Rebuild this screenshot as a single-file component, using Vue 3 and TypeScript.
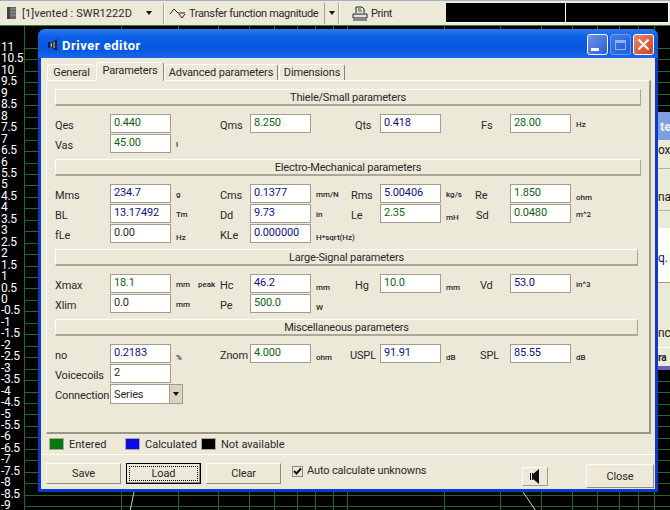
<template>
  <div class="screen">
    <div class="toolbar">
      <div class="tb-item tb-driver">
        <svg class="tb-icon" width="9" height="12" viewBox="0 0 9 12">
          <rect width="9" height="12" fill="#444" />
          <path d="M4 0v12M6 0v12M8 0v12M3 2h6M3 5h6M3 8h6" stroke="#aaa" stroke-width="0.7" />
        </svg>
        <span class="tb-text">[1]vented : SWR1222D</span>
        <span class="arrow" />
      </div>
      <div class="tb-sep" />
      <div class="tb-item tb-graph">
        <svg width="17" height="12" viewBox="0 0 17 12" fill="none" stroke="#222">
          <path d="M1 7 L5 2 L9 6 L16 6" />
          <path d="M10 7 L13 11 L16 7" />
        </svg>
        <span class="tb-text">Transfer function magnitude</span>
      </div>
      <div class="tb-drop"><span class="arrow" /></div>
      <div class="tb-sep" />
      <div class="tb-item tb-print">
        <svg width="16" height="15" viewBox="0 0 16 15" fill="none" stroke="#222">
          <path d="M4 7V1h6l2 2v4" />
          <path d="M6 3h3M6 5h4" stroke-width="0.8" />
          <path d="M1 8h14v4H1z" fill="#ddd" />
          <path d="M1 14h14" />
        </svg>
        <span class="tb-text">Print</span>
      </div>
      <div class="tb-panels">
        <div class="panel panel-a" />
        <div class="panel panel-b" />
      </div>
    </div>

    <div class="plot">
      <svg class="grid" width="670" height="485" viewBox="0 0 670 485">
        <line v-for="x in gridX" :key="'v' + x" :x1="x + 0.5" y1="0" :x2="x + 0.5" y2="485" />
        <line v-for="y in gridY" :key="'h' + y" x1="24" :y1="y" x2="670" :y2="y" />
        <path class="curve" d="M134 466 L130 485 M523 466 L536 485" />
      </svg>
      <div class="axis">
        <span v-for="t in ticks" :key="t">{{ t }}</span>
      </div>
    </div>

    <!-- window behind the dialog, only its left edge shows -->
    <div class="back-win">
      <div class="back-title">te</div>
      <div class="back-body">
        <span class="bw1">ox</span>
        <div class="back-rule r1" />
        <div class="back-rule r2" />
        <span class="bw2">na</span>
        <div class="back-white"><span class="bw3">q.</span></div>
        <span class="bw4">nce</span>
        <div class="back-rule r3" />
        <span class="bw5">ra</span>
        <div class="back-plot" />
      </div>
    </div>

    <div class="dialog">
      <div class="titlebar">
        <svg class="title-icon" width="10" height="12" viewBox="0 0 10 12">
          <path d="M0 3h2v6H0z" fill="#222" />
          <path d="M3 4l6-4v12l-6-4z" fill="#222" />
          <path d="M3.5 4.5v3M6 3v6" stroke="#ccd" />
        </svg>
        <span class="title-text">Driver editor</span>
        <div class="win-btns">
          <div class="win-btn"><span class="min-glyph" /></div>
          <div class="win-btn win-dim"><span class="max-glyph" /></div>
          <div class="win-btn win-close">
            <svg width="13" height="13" viewBox="0 0 13 13">
              <path d="M1.5 1.5l10 10M11.5 1.5l-10 10" stroke="#fff" stroke-width="2.2" />
            </svg>
          </div>
        </div>
      </div>

      <div class="client">
        <div class="tabs">
          <div v-for="t in tabs" :key="t" class="tab" :class="{ active: t === 'Parameters' }">{{ t }}</div>
        </div>

        <div class="page">
          <section v-for="s in sections" :key="s.title" class="section">
            <div class="sec-head" :class="{ short: s.short }">{{ s.title }}</div>
            <div class="rows">
              <div v-for="(row, i) in s.rows" :key="i" class="row">
                <template v-for="(c, j) in row" :key="j">
                  <div class="lbl" :style="{ marginLeft: (c.indent ?? 0) + 'px' }">{{ c.label }}</div>
                  <div class="field" :class="c.kind">{{ c.value }}</div>
                  <div class="unit" :class="{ low: c.low }">{{ c.unit }}</div>
                </template>
              </div>
              <div v-if="s.title.startsWith('Misc')" class="row">
                <div class="lbl">Connection</div>
                <div class="combo">
                  <span>Series</span>
                  <span class="combo-btn"><span class="arrow" /></span>
                </div>
              </div>
            </div>
          </section>
        </div>

        <div class="legend">
          <span class="swatch green" /><span class="leg-text">Entered</span>
          <span class="swatch blue" /><span class="leg-text">Calculated</span>
          <span class="swatch black" /><span class="leg-text">Not available</span>
        </div>

        <div class="footer">
          <button class="btn">Save</button>
          <button class="btn default"><span class="focus">Load</span></button>
          <button class="btn">Clear</button>
          <label class="check">
            <span class="box">
              <svg width="9" height="9" viewBox="0 0 9 9">
                <path d="M1 4l2.5 2.5L8 1.5" fill="none" stroke="#111" stroke-width="2" />
              </svg>
            </span>
            Auto calculate unknowns
          </label>
          <button class="icon-btn">
            <svg width="10" height="15" viewBox="0 0 10 15">
              <path d="M0 4h1v7H0zM2 4h1v7H2z" fill="#111" />
              <path d="M3 5l6-5v15l-6-5z" fill="#111" />
            </svg>
          </button>
          <button class="btn close-btn">Close</button>
        </div>
      </div>
    </div>
  </div>
</template>

<script setup lang="ts">
type Kind = 'ent' | 'calc' | 'none'

interface Cell {
  label: string
  value: string
  unit?: string
  kind: Kind
  indent?: number
  low?: boolean
}

interface Section {
  title: string
  short?: boolean
  rows: Cell[][]
}

const tabs = ['General', 'Parameters', 'Advanced parameters', 'Dimensions']

const sections: Section[] = [
  {
    title: 'Thiele/Small parameters',
    rows: [
      [
        { label: 'Qes', value: '0.440', kind: 'ent' },
        { label: 'Qms', value: '8.250', kind: 'ent' },
        { label: 'Qts', value: '0.418', kind: 'calc', indent: 5 },
        { label: 'Fs', value: '28.00', unit: 'Hz', kind: 'ent', indent: 1 }
      ],
      [{ label: 'Vas', value: '45.00', unit: 'l', kind: 'ent' }]
    ]
  },
  {
    title: 'Electro-Mechanical parameters',
    rows: [
      [
        { label: 'Mms', value: '234.7', unit: 'g', kind: 'calc' },
        { label: 'Cms', value: '0.1377', unit: 'mm/N', kind: 'calc' },
        { label: 'Rms', value: '5.00406', unit: 'kg/s', kind: 'calc', indent: 1 },
        { label: 'Re', value: '1.850', unit: 'ohm', kind: 'ent', indent: -5, low: true }
      ],
      [
        { label: 'BL', value: '13.17492', unit: 'Tm', kind: 'calc' },
        { label: 'Dd', value: '9.73', unit: 'in', kind: 'calc' },
        { label: 'Le', value: '2.35', unit: 'mH', kind: 'ent', indent: 1, low: true },
        { label: 'Sd', value: '0.0480', unit: 'm^2', kind: 'ent', indent: -4 }
      ],
      [
        { label: 'fLe', value: '0.00', unit: 'Hz', kind: 'none', low: true },
        { label: 'KLe', value: '0.000000', unit: 'H*sqrt(Hz)', kind: 'calc', low: true }
      ]
    ]
  },
  {
    title: 'Large-Signal parameters',
    short: true,
    rows: [
      [
        { label: 'Xmax', value: '18.1', unit: 'mm    peak', kind: 'ent' },
        { label: 'Hc', value: '46.2', unit: 'mm', kind: 'calc', low: true },
        { label: 'Hg', value: '10.0', unit: 'mm', kind: 'ent', indent: 5, low: true },
        { label: 'Vd', value: '53.0', unit: 'in^3', kind: 'calc' }
      ],
      [
        { label: 'Xlim', value: '0.0', unit: 'mm', kind: 'none' },
        { label: 'Pe', value: '500.0', unit: 'W', kind: 'ent', low: true }
      ]
    ]
  },
  {
    title: 'Miscellaneous parameters',
    short: true,
    rows: [
      [
        { label: 'no', value: '0.2183', unit: '%', kind: 'calc', low: true },
        { label: 'Znom', value: '4.000', unit: 'ohm', kind: 'ent', low: true },
        { label: 'USPL', value: '91.91', unit: 'dB', kind: 'calc', low: true },
        { label: 'SPL', value: '85.55', unit: 'dB', kind: 'calc', low: true }
      ],
      [{ label: 'Voicecoils', value: '2', kind: 'none' }]
    ]
  }
]

// log-spaced verticals of the plot behind the dialog
const gridX = [24, 121, 178, 218, 249, 274, 297, 315, 333, 347, 444, 500, 541, 572, 597, 619, 638, 654]

const ticks: string[] = []
for (let v = 11; v >= -9; v -= 0.5) ticks.push(String(v))

const gridY = ticks.map((_, i) => Math.round(22 + i * 11.45) + 0.5)
</script>

<style>
html,
body {
  margin: 0;
  background: #000;
  overflow: hidden;
}
</style>

<style scoped>
.screen {
  position: relative;
  width: 670px;
  height: 510px;
  overflow: hidden;
  background: #000;
  font-family: Roboto, "Liberation Sans", sans-serif;
  font-size: 11px;
  letter-spacing: -0.15px;
  color: #2a2a2a;
}

.toolbar {
  display: flex;
  align-items: center;
  height: 24px;
  background: #ece9d8;
  border-top: 1px solid #9fb0cc;
}
.tb-item {
  display: flex;
  align-items: center;
  flex: none;
}
.tb-item svg {
  flex: none;
}
.tb-text {
  white-space: nowrap;
}
.tb-driver {
  width: 163px;
  padding: 0 11px 0 7px;
  box-sizing: border-box;
  letter-spacing: 0.1px;
}
.tb-icon {
  margin-right: 6px;
}
.tb-driver .arrow {
  margin-left: auto;
}
.tb-sep {
  flex: none;
  height: 21px;
  border-left: 1px solid #a8a592;
  border-right: 1px solid #fff;
}
.tb-graph {
  gap: 3px;
  width: 160px;
  height: 21px;
  padding-left: 4px;
  box-sizing: border-box;
  border-right: 1px solid #a8a592;
  letter-spacing: -0.35px;
}
.tb-drop {
  display: flex;
  justify-content: center;
  flex: none;
  width: 13px;
}
.tb-print {
  gap: 3px;
  width: 106px;
  padding-left: 12px;
  box-sizing: border-box;
  letter-spacing: -0.4px;
}
.tb-panels {
  display: flex;
  height: 20px;
}
.panel {
  height: 19px;
  background: #000;
  border-bottom: 1px solid #fff;
}
.panel-a {
  width: 119px;
  border-right: 1px solid #fff;
}
.panel-b {
  width: 102px;
  border-right: 1px solid #fff;
}
.arrow {
  display: inline-block;
  width: 0;
  height: 0;
  border-left: 3.5px solid transparent;
  border-right: 3.5px solid transparent;
  border-top: 4px solid #111;
}

.plot {
  position: relative;
  height: 485px;
  border-top: 1px solid #3b7d3b;
}
.grid {
  position: absolute;
  left: 0;
  top: 0;
}
.grid line {
  stroke: #1f6b25;
  stroke-width: 1;
}
.grid .curve {
  stroke: #cfcfcf;
  fill: none;
}
.axis {
  position: absolute;
  left: 1px;
  top: 16px;
  display: flex;
  flex-direction: column;
  color: #fff;
  font-size: 12px;
  letter-spacing: -0.3px;
  line-height: 11.45px;
}

.back-win {
  position: absolute;
  left: 658px;
  top: 112px;
  width: 60px;
}
.back-title {
  height: 28px;
  padding-left: 2px;
  background: #7d9fe0;
  color: #eef;
  font-weight: 700;
  font-size: 13px;
  line-height: 30px;
}
.back-body {
  position: relative;
  height: 305px;
  background: #ece9d8;
  color: #222;
}
.back-body span {
  position: absolute;
  left: 0;
}
.back-rule {
  position: absolute;
  left: 0;
  right: 0;
  height: 1px;
  background: #b5b2a0;
}
.r1 { top: 28px; }
.r2 { top: 70px; }
.r3 { top: 207px; background: #fff; }
.back-white {
  position: absolute;
  left: 0;
  right: 0;
  top: 88px;
  height: 54px;
  background: #fff;
  border-bottom: 1px solid #a29e8c;
}
.bw1 { top: 3px; font-size: 12px; }
.bw2 { top: 50px; font-size: 12px; }
.bw3 { top: 23px; font-size: 12px; color: #10107e; }
.bw4 { top: 186px; font-size: 12px; }
.bw5 { top: 212px; font-weight: 700; font-size: 10px; }
.back-plot {
  position: absolute;
  left: 0;
  right: 0;
  top: 226px;
  height: 79px;
  box-sizing: border-box;
  border-top: 4px solid #6a5fc0;
  background: repeating-linear-gradient(#000 0 10.5px, #1f6b25 10.5px 11.5px);
}

.dialog {
  position: absolute;
  left: 38px;
  top: 29px;
  width: 620px;
  height: 463px;
  box-sizing: border-box;
  padding: 0 3px 3px;
  background: #0a3ad0;
  border-radius: 7px 7px 0 0;
}
.titlebar {
  display: flex;
  align-items: center;
  height: 29px;
  background: linear-gradient(#2a7cf0, #0b5ee6 30%, #0a57e0 70%, #1a68ec);
  margin: 0 -3px;
  padding: 3px 3px 0 10px;
  box-sizing: border-box;
  border-radius: 7px 7px 0 0;
}
.title-icon {
  margin-right: 4px;
}
.title-text {
  flex: 1;
  color: #fff;
  font-weight: 700;
  font-size: 13px;
  letter-spacing: 0.5px;
}
.win-btns {
  display: flex;
  gap: 2px;
  padding-right: 1px;
  margin-top: -1px;
}
.win-btn {
  display: flex;
  align-items: center;
  justify-content: center;
  width: 21px;
  height: 21px;
  box-sizing: border-box;
  border: 1px solid #fff;
  border-radius: 3px;
  background: linear-gradient(135deg, #6d94ea, #2c5ed8);
}
.win-dim {
  opacity: 0.55;
  border-color: #b6c9f2;
}
.win-close {
  background: linear-gradient(135deg, #e9886c, #cc3f1c);
}
.min-glyph {
  width: 8px;
  height: 3px;
  margin: 9px 6px 0 0;
  background: #fff;
}
.max-glyph {
  width: 11px;
  height: 10px;
  box-sizing: border-box;
  border: 1px solid #fff;
  border-top-width: 3px;
}

.client {
  height: 431px;
  background: #ece9d8;
  box-sizing: border-box;
  padding: 4px 0 0 5px;
  display: flex;
  flex-direction: column;
}
.tabs {
  display: flex;
  align-items: flex-end;
  height: 18px;
  padding-left: 1px;
}
.tab {
  flex: none;
  height: 15px;
  box-sizing: content-box;
  width: 47px;
  text-align: center;
  line-height: 16px;
  white-space: nowrap;
  border-top: 1px solid #fff;
  border-left: 1px solid #fff;
  border-radius: 3px 3px 0 0;
}
.tab.active {
  width: 66px;
  height: 18px;
  line-height: 16px;
  margin: 0 0 -1px 1px;
  position: relative;
  z-index: 1;
  border-right: 1px solid #8a8778;
  background: #ece9d8;
}
.tab:nth-child(3) {
  width: 112px;
  border-right: 1px solid #8a8778;
}
.tab:nth-child(4) {
  width: 64px;
  margin-left: 1px;
  border-right: 1px solid #8a8778;
}
.page {
  flex: none;
  width: 605px;
  height: 354px;
  box-sizing: border-box;
  padding: 8px 0 0 8px;
  border-top: 1px solid #fff;
  border-left: 1px solid #fff;
  border-right: 2px solid #9a9787;
  border-bottom: 2px solid #9a9787;
}
.section {
  margin-bottom: 5px;
}
.sec-head {
  width: 586px;
  height: 17px;
  box-sizing: border-box;
  border-top: 1px solid #fff;
  border-left: 1px solid #fff;
  border-right: 1px solid #aca899;
  border-bottom: 2px solid #aca899;
  text-align: center;
  line-height: 15px;
  letter-spacing: -0.2px;
}
.sec-head.short {
  width: 583px;
}
.rows {
  margin-top: 8px;
  display: flex;
  flex-direction: column;
}
.row {
  display: grid;
  grid-template-columns: 55px 61px 49px 30px 61px 39px 30px 61px 39px 30px 61px 40px;
  height: 20px;
}
.lbl {
  padding-top: 5px;
  white-space: nowrap;
  line-height: 14px;
}
.field {
  height: 19px;
  box-sizing: border-box;
  border: 1px solid #a29e8c;
  background: #fff;
  padding-left: 3px;
  line-height: 16px;
  white-space: nowrap;
  overflow: hidden;
}
.field.ent {
  color: #0c660c;
}
.field.calc {
  color: #10107e;
}
.unit {
  padding: 5px 0 0 5px;
  font-size: 8px;
  font-weight: 500;
  line-height: 11px;
  letter-spacing: 0;
  white-space: pre;
}
.unit.low {
  padding-top: 8px;
}
.combo {
  display: flex;
  justify-content: space-between;
  align-items: center;
  grid-column: 2 / 4;
  width: 73px;
  height: 20px;
  box-sizing: border-box;
  border: 1px solid #a29e8c;
  background: #fff;
  padding-left: 3px;
}
.combo-btn {
  display: flex;
  align-items: center;
  justify-content: center;
  width: 12px;
  height: 18px;
  background: #d8d4c0;
  border-left: 1px solid #a29e8c;
}

.legend {
  display: flex;
  align-items: center;
  flex: none;
  height: 20px;
  padding-left: 3px;
  letter-spacing: 0;
}
.swatch {
  flex: none;
  width: 15px;
  height: 12px;
  box-sizing: border-box;
  border: 1px solid #aca899;
  margin-right: 5px;
}
.swatch.green { background: #06780c; }
.swatch.blue { background: #0a0ae8; }
.swatch.black { background: #000; }
.leg-text {
  width: 56px;
  white-space: nowrap;
}

.footer {
  display: flex;
  align-items: flex-start;
  margin-left: -5px;
  padding: 8px 0 0 5px;
  border-top: 1px solid #fff;
  gap: 5px;
  flex: 1;
}
.btn {
  flex: none;
  width: 75px;
  height: 21px;
  padding: 0;
  box-sizing: border-box;
  background: #ece9d8;
  font: inherit;
  letter-spacing: inherit;
  color: #2a2a2a;
  border: 1px solid;
  border-color: #fff #8f8c7c #8f8c7c #fff;
}
.btn.default {
  border: 1px solid #000;
  box-shadow: inset -1px -1px 0 #8f8c7c;
}
.focus {
  display: block;
  margin: 2px;
  line-height: 13px;
  border: 1px dotted #000;
}
.check {
  display: flex;
  align-items: center;
  flex: none;
  gap: 4px;
  width: 225px;
  height: 16px;
  margin: 0 0 0 6px;
  white-space: nowrap;
  line-height: 14px;
}
.box {
  display: flex;
  align-items: center;
  justify-content: center;
  flex: none;
  width: 11px;
  height: 11px;
  box-sizing: border-box;
  border: 1px solid #8f8c7c;
}
.icon-btn {
  display: flex;
  align-items: center;
  justify-content: center;
  flex: none;
  width: 26px;
  height: 19px;
  padding: 0;
  margin-top: 4px;
  background: #ece9d8;
  border: 1px solid;
  border-color: #fff #a29e8c #a29e8c #fff;
}
.close-btn {
  width: 68px;
  height: 24px;
  margin: 1px 0 0 33px;
}
</style>
